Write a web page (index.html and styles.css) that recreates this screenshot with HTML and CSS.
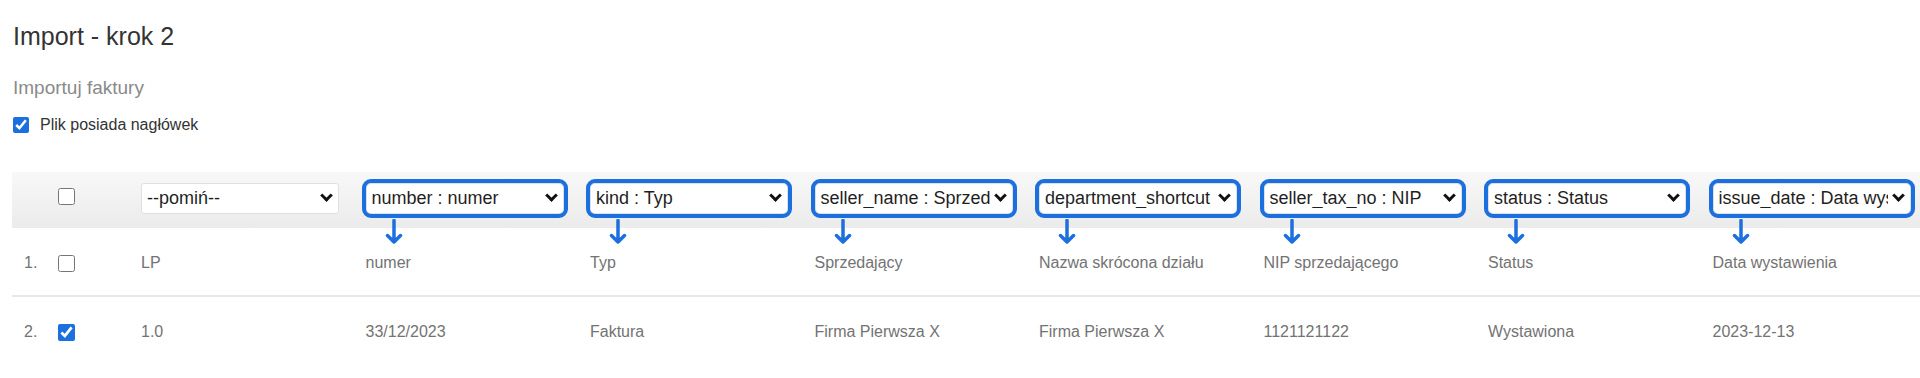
FILE: index.html
```html
<!DOCTYPE html>
<html lang="pl">
<head>
    <meta charset="UTF-8">
    <meta name="viewport" content="width=device-width, initial-scale=1.0">
    <title>Import - krok 2</title>
    <link rel="stylesheet" href="styles.css">
</head>
<body>

    <h1 class="page-title">Import - krok 2</h1>
    <h2 class="subtitle">Importuj faktury</h2>

    <label class="header-toggle">
        <input type="checkbox" checked>
        <span>Plik posiada nagłówek</span>
    </label>

    <table class="import-table">
        <colgroup>
            <col class="col-index">
            <col class="col-check">
            <col class="col-field" span="8">
        </colgroup>
        <thead>
            <tr>
                <th></th>
                <th><input type="checkbox" class="row-check"></th>
                <th>
                    <span class="select-wrap">
                        <select class="field-select"><option>--pomiń--</option></select>
                    </span>
                </th>
                <th class="mapped">
                    <span class="select-wrap">
                        <select class="field-select"><option>number : numer</option></select>
                    </span>
                    <svg class="map-arrow" viewBox="0 0 18 26"><path d="M9 1.5 V23 M2.5 16.5 L9 23 L15.5 16.5"/></svg>
                </th>
                <th class="mapped">
                    <span class="select-wrap">
                        <select class="field-select"><option>kind : Typ</option></select>
                    </span>
                    <svg class="map-arrow" viewBox="0 0 18 26"><path d="M9 1.5 V23 M2.5 16.5 L9 23 L15.5 16.5"/></svg>
                </th>
                <th class="mapped">
                    <span class="select-wrap">
                        <select class="field-select"><option>seller_name : Sprzedający</option></select>
                    </span>
                    <svg class="map-arrow" viewBox="0 0 18 26"><path d="M9 1.5 V23 M2.5 16.5 L9 23 L15.5 16.5"/></svg>
                </th>
                <th class="mapped">
                    <span class="select-wrap">
                        <select class="field-select"><option>department_shortcut : Nazwa skrócona działu</option></select>
                    </span>
                    <svg class="map-arrow" viewBox="0 0 18 26"><path d="M9 1.5 V23 M2.5 16.5 L9 23 L15.5 16.5"/></svg>
                </th>
                <th class="mapped">
                    <span class="select-wrap">
                        <select class="field-select"><option>seller_tax_no : NIP</option></select>
                    </span>
                    <svg class="map-arrow" viewBox="0 0 18 26"><path d="M9 1.5 V23 M2.5 16.5 L9 23 L15.5 16.5"/></svg>
                </th>
                <th class="mapped">
                    <span class="select-wrap">
                        <select class="field-select"><option>status : Status</option></select>
                    </span>
                    <svg class="map-arrow" viewBox="0 0 18 26"><path d="M9 1.5 V23 M2.5 16.5 L9 23 L15.5 16.5"/></svg>
                </th>
                <th class="mapped">
                    <span class="select-wrap">
                        <select class="field-select"><option>issue_date : Data wystawienia</option></select>
                    </span>
                    <svg class="map-arrow" viewBox="0 0 18 26"><path d="M9 1.5 V23 M2.5 16.5 L9 23 L15.5 16.5"/></svg>
                </th>
            </tr>
        </thead>
        <tbody>
            <tr>
                <td class="row-index">1.</td>
                <td><input type="checkbox" class="row-check"></td>
                <td>LP</td>
                <td>numer</td>
                <td>Typ</td>
                <td>Sprzedający</td>
                <td>Nazwa skrócona działu</td>
                <td>NIP sprzedającego</td>
                <td>Status</td>
                <td>Data wystawienia</td>
            </tr>
            <tr>
                <td class="row-index">2.</td>
                <td><input type="checkbox" class="row-check" checked></td>
                <td>1.0</td>
                <td>33/12/2023</td>
                <td>Faktura</td>
                <td>Firma Pierwsza X</td>
                <td>Firma Pierwsza X</td>
                <td>1121121122</td>
                <td>Wystawiona</td>
                <td>2023-12-13</td>
            </tr>
        </tbody>
    </table>

</body>
</html>
```

FILE: styles.css
```css
/* --- Base --- */
:root {
    --text-dark: #333;
    --text-muted: #8a8a8a;
    --cell-text: #737373;
    --accent: #1b6fde;
    --line: #e8e8e8;
}

body, html {
    margin: 0;
    padding: 0;
    background: #fff;
    font-family: "Liberation Sans", Arial, sans-serif;
    color: var(--text-dark);
    overflow: hidden;
}

body {
    padding: 0 13px;
}

/* --- Headings --- */
.page-title {
    margin: 22px 0 0;
    font-size: 25px;
    line-height: 29px;
    font-weight: 400;
}

.subtitle {
    margin: 26px 0 0;
    font-size: 19px;
    line-height: 22px;
    font-weight: 400;
    color: var(--text-muted);
}

.header-toggle {
    display: flex;
    align-items: center;
    gap: 11px;
    margin-top: 17px;
    font-size: 16px;
    line-height: 18px;
    color: var(--text-dark);
}

.header-toggle input {
    width: 16px;
    height: 16px;
    margin: 0;
    accent-color: var(--accent);
}

/* --- Import table --- */
.import-table {
    table-layout: fixed;
    width: 1925px;
    margin: 38px 0 0 -1px;
    border-collapse: separate;
    border-spacing: 0;
    font-size: 16px;
}

.col-index { width: 33px; }
.col-check { width: 96px; }
.col-field { width: 224.5px; }

.import-table th {
    position: relative;
    height: 52px;
    padding: 0 0 4px;
    text-align: left;
    vertical-align: middle;
    background: linear-gradient(#f8f8f8, #ebebeb);
}

.import-table td {
    height: 64px;
    padding: 3px 0 0;
    vertical-align: middle;
    color: var(--cell-text);
    white-space: nowrap;
}

.import-table tbody tr:first-child td {
    border-bottom: 2px solid var(--line);
}

.import-table td.row-index {
    padding-left: 12px;
}

.row-check {
    width: 17px;
    height: 17px;
    margin: 0 0 0 13px;
    vertical-align: middle;
    accent-color: var(--accent);
}

.import-table th .row-check {
    position: relative;
    top: -2px;
}

/* --- Column selects --- */
.select-wrap {
    position: relative;
    display: block;
    width: 198px;
}

/* chevron drawn over the select */
.select-wrap::after {
    content: "";
    position: absolute;
    top: 8px;
    right: 8px;
    width: 6px;
    height: 6px;
    border-right: 3px solid #111;
    border-bottom: 3px solid #111;
    transform: rotate(45deg);
    pointer-events: none;
}

.field-select {
    display: block;
    width: 198px;
    height: 31px;
    padding: 0 22px 0 5px;
    border: 1px solid #dde1e6;
    border-radius: 3px;
    background: #fff;
    font-family: "Liberation Sans", Arial, sans-serif;
    font-size: 18px;
    color: #1f1f1f;
    appearance: none;
    -webkit-appearance: none;
}

/* annotation: mapped columns are boxed and point at their data */
.mapped .field-select {
    outline: 4px solid var(--accent);
    outline-offset: 0;
    border-radius: 5px;
}

.map-arrow {
    position: absolute;
    top: 47px;
    left: 19px;
    width: 18px;
    height: 26px;
    z-index: 5;
    fill: none;
    stroke: var(--accent);
    stroke-width: 3.5;
    stroke-linecap: round;
    stroke-linejoin: round;
}
```
